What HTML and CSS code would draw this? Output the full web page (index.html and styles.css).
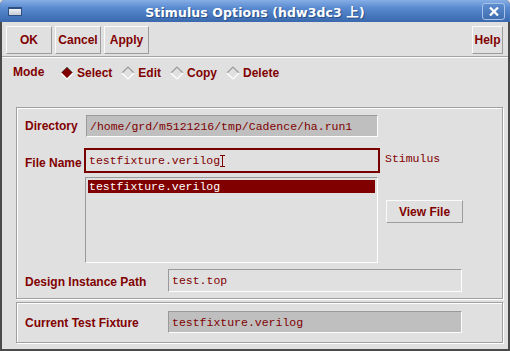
FILE: index.html
```html
<!DOCTYPE html>
<html lang="en">
<head>
  <meta charset="UTF-8" />
  <title>Stimulus Options</title>
  <link rel="stylesheet" href="styles.css">
</head>
<body>

<div class="window">
  <div class="titlebar">
    <div class="tb-left"><span class="win-icon"></span></div>
    <div class="title">Stimulus Options (hdw3dc3 上)</div>
    <div class="tb-right">
      <span class="close">
        <svg width="10" height="9" viewBox="0 0 10 9"><path d="M1 0.5 L9 8.5 M9 0.5 L1 8.5" stroke="#fff" stroke-width="2.2"/></svg>
      </span>
    </div>
  </div>

  <div class="content">
    <div class="toolbar">
      <button class="btn w46">OK</button>
      <button class="btn w46">Cancel</button>
      <button class="btn w45">Apply</button>
      <span class="spacer"></span>
      <button class="btn w30">Help</button>
    </div>
    <div class="separator"></div>

    <div class="mode">
      <span class="mode-label">Mode</span>
      <label class="radio">
        <svg width="14" height="14" viewBox="0 0 14 14">
          <polygon points="7,1 13,7 7,13 1,7" fill="#7f0000"/>
          <polyline points="1,7 7,1 13,7" fill="none" stroke="#6a6a6a" stroke-width="1"/>
          <polyline points="1,7 7,13 13,7" fill="none" stroke="#fff" stroke-width="1.2"/>
        </svg>
        Select
      </label>
      <label class="radio">
        <svg width="14" height="14" viewBox="0 0 14 14">
          <polyline points="1,7 7,1 13,7" fill="none" stroke="#9a9a9a" stroke-width="1.2"/>
          <polyline points="1,7 7,13 13,7" fill="none" stroke="#fff" stroke-width="1.2"/>
        </svg>
        Edit
      </label>
      <label class="radio">
        <svg width="14" height="14" viewBox="0 0 14 14">
          <polyline points="1,7 7,1 13,7" fill="none" stroke="#9a9a9a" stroke-width="1.2"/>
          <polyline points="1,7 7,13 13,7" fill="none" stroke="#fff" stroke-width="1.2"/>
        </svg>
        Copy
      </label>
      <label class="radio">
        <svg width="14" height="14" viewBox="0 0 14 14">
          <polyline points="1,7 7,1 13,7" fill="none" stroke="#9a9a9a" stroke-width="1.2"/>
          <polyline points="1,7 7,13 13,7" fill="none" stroke="#fff" stroke-width="1.2"/>
        </svg>
        Delete
      </label>
    </div>

    <div class="frame main-frame">
      <div class="row dir-row">
        <span class="label dir-label">Directory</span>
        <div class="field dark dir-field">/home/grd/m5121216/tmp/Cadence/ha.run1</div>
      </div>

      <div class="row file-row">
        <span class="label file-label">File Name</span>
        <div class="focus-field">testfixture.verilo<span class="caret">g</span><span class="ibeam"></span></div>
        <span class="stim">Stimulus</span>
      </div>

      <div class="row list-row">
        <div class="listbox">
          <div class="list-item selected">testfixture.verilog</div>
        </div>
        <button class="btn view-btn">View File</button>
      </div>

      <div class="row path-row">
        <span class="label path-label">Design Instance Path</span>
        <div class="field light path-field">test.top</div>
      </div>
    </div>

    <div class="frame fixture-frame">
      <div class="row">
        <span class="label path-label">Current Test Fixture</span>
        <div class="field dark path-field">testfixture.verilog</div>
      </div>
    </div>
  </div>
</div>

</body>
</html>
```

FILE: styles.css
```css
* {
  box-sizing: border-box;
}
body {
  margin: 0;
  background: #e0e0e0;
  font-family: "Liberation Sans", Arial, sans-serif;
}
.window {
  width: 510px;
  height: 351px;
  display: flex;
  flex-direction: column;
  background: #4a4a4a;
  border-radius: 5px 5px 0 0;
  overflow: hidden;
}

/* title bar */
.titlebar {
  height: 22px;
  flex: none;
  display: flex;
  align-items: center;
  background: linear-gradient(#86aee6, #5a8bd0 35%, #4777bd 70%, #3a69ad);
  color: #fff;
}
.tb-left, .tb-right {
  width: 28px;
  display: flex;
  align-items: center;
}
.tb-left {
  padding-left: 8px;
}
.tb-right {
  justify-content: flex-end;
  padding-right: 5px;
}
.win-icon {
  width: 14px;
  height: 9px;
  background: linear-gradient(#eef0f4, #c6ccd6);
  border: 1px solid #2f4f80;
  border-top-width: 2px;
}
.title {
  flex: 1;
  text-align: center;
  font: bold 12.5px "DejaVu Sans", "Noto Sans CJK JP", sans-serif;
  text-shadow: 1px 1px 0 #2a4f85;
  letter-spacing: 0.1px;
}
.close {
  width: 23px;
  height: 17px;
  display: flex;
  align-items: center;
  justify-content: center;
  border: 1px solid #a9c3e8;
  border-radius: 3px;
  background: linear-gradient(#5d8ccf, #3f6eb1);
}

/* window content */
.content {
  flex: 1;
  margin: 0 2px 2px;
  background: #e0e0e0;
  display: flex;
  flex-direction: column;
}
.btn {
  height: 28px;
  padding: 0;
  background: #e0e0e0;
  border: 1px solid;
  border-color: #fafafa #9c9c9c #9c9c9c #fafafa;
  color: #800000;
  font: bold 12px "Liberation Sans", Arial, sans-serif;
}
.w46 { width: 46px; }
.w45 { width: 45px; }
.w30 { width: 31px; }
.toolbar {
  display: flex;
  gap: 3px;
  padding: 4px 5px 0 4px;
}
.spacer {
  flex: 1;
}
.separator {
  margin-top: 2px;
  height: 2px;
  border-top: 1px solid #a4a4a4;
  border-bottom: 1px solid #fcfcfc;
}

/* mode radios */
.mode {
  margin-top: 7px;
  height: 16px;
  display: flex;
  align-items: center;
  padding-left: 11px;
  color: #800000;
  font-weight: bold;
  font-size: 12px;
}
.mode-label {
  width: 47px;
  margin-top: -3px;
}
.radio {
  display: flex;
  align-items: center;
  gap: 3px;
  margin-right: 9px;
}

/* frames */
.frame {
  margin: 0 5px 0 14px;
  border: 1px solid #a0a0a0;
  box-shadow: inset 1px 1px 0 #fff, 1px 1px 0 #fff;
  padding-left: 8px;
}
.main-frame {
  margin-top: 26px;
  padding-top: 7px;
  padding-bottom: 6px;
}
.fixture-frame {
  margin-top: 3px;
  padding-top: 8px;
  padding-bottom: 9px;
}
.row {
  display: flex;
  align-items: center;
}
.label {
  color: #800000;
  font-weight: bold;
  font-size: 12px;
}
.field {
  height: 22px;
  display: flex;
  align-items: center;
  padding: 0 3px;
  border: 1px solid;
  border-color: #9a9a9a #fdfdfd #fdfdfd #9a9a9a;
  color: #800000;
  font: 11.5px "Liberation Mono", "Courier New", monospace;
}
.field.dark {
  background: #bfbfbf;
}
.field.light {
  background: #e0e0e0;
}
.dir-label {
  width: 61px;
}
.dir-field {
  width: 292px;
}
.file-row {
  margin-top: 11px;
  height: 25px;
}
.file-label {
  width: 59px;
  margin-top: 5px;
}
.focus-field {
  width: 296px;
  height: 25px;
  border: 2px solid #7a0000;
  display: flex;
  align-items: center;
  padding-left: 3px;
  color: #800000;
  font: 11.5px "Liberation Mono", "Courier New", monospace;
}
.ibeam {
  width: 5px;
  height: 12px;
  margin-left: 0;
  border-top: 1px solid #7a0000;
  border-bottom: 1px solid #7a0000;
  background: linear-gradient(90deg, transparent 2px, #7a0000 2px, #7a0000 3px, transparent 3px);
}
.stim {
  margin-left: 5px;
  margin-top: -4px;
  color: #800000;
  font: 11.5px "Liberation Mono", "Courier New", monospace;
}
.list-row {
  margin-top: 4px;
  align-items: flex-start;
}
.listbox {
  margin-left: 60px;
  width: 293px;
  height: 86px;
  border: 1px solid;
  border-color: #9a9a9a #fdfdfd #fdfdfd #9a9a9a;
  padding: 2px;
}
.list-item {
  height: 13px;
  line-height: 13px;
  padding-left: 1px;
  font: 11.5px/13px "Liberation Mono", "Courier New", monospace;
}
.list-item.selected {
  background: #800000;
  color: #fff;
}
.view-btn {
  margin-left: 8px;
  margin-top: 23px;
  width: 77px;
  height: 23px;
}
.path-row {
  margin-top: 6px;
}
.path-label {
  width: 143px;
  margin-top: 2px;
}
.path-field {
  width: 294px;
  height: 23px;
}
.fixture-frame .path-field {
  height: 22px;
}
```
